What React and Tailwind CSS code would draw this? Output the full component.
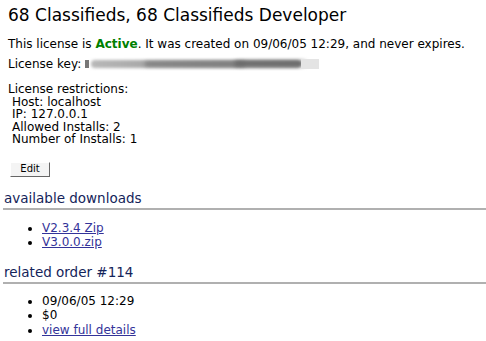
export default function App() {
  const body = { fontFamily: '"DejaVu Sans", Verdana, sans-serif' };
  return (
    <div className="w-[486px] h-[341px] bg-white text-black overflow-hidden" style={body}>
      <div className="pl-[8px] pt-[5px]">
        <h1 className="text-[17px] leading-[20px] font-normal">68 Classifieds, 68 Classifieds Developer</h1>
        <p className="text-[12px] leading-[14px] mt-[12px]">
          This license is <span className="font-bold text-[#008000]">Active</span>. It was created on 09/06/05 12:29, and never expires.
        </p>
        <div className="flex items-center text-[12px] leading-[14px] mt-[6px]">
          <span>License key:</span>
          <div className="ml-[4px] relative w-[234px] h-[12px]">
            <div className="absolute left-0 top-[2px] w-[4px] h-[8px] bg-[#777] blur-[0.5px]" />
            <div className="absolute left-[6px] top-[2px] w-[210px] h-[8px] rounded-full bg-gradient-to-r from-[#b8b8b8] via-[#9a9a9a] to-[#8a8a8a] blur-[1.5px]" />
            <div className="absolute left-[60px] top-[4px] w-[100px] h-[4px] bg-[#777] blur-[2px]" />
            <div className="absolute left-[150px] top-[3px] w-[70px] h-[5px] bg-[#666] blur-[2px]" />
            <div className="absolute left-[216px] top-[1px] w-[18px] h-[10px] bg-[#e4e4e4]" />
          </div>
        </div>
        <div className="text-[12px] leading-[12.6px] mt-[12px]">
          <div>License restrictions:</div>
          <div className="pl-[4px]">Host: localhost</div>
          <div className="pl-[4px]">IP: 127.0.0.1</div>
          <div className="pl-[4px]">Allowed Installs: 2</div>
          <div className="pl-[4px]">Number of Installs: 1</div>
        </div>
        <button className="mt-[16px] ml-[2px] w-[40px] h-[15px] bg-[#f4f4f4] border border-t-white border-l-white border-r-[#666] border-b-[#666] text-[10px] leading-[12px] flex items-center justify-center">
          Edit
        </button>
      </div>
      <h2 className="mt-[13px] ml-[3px] text-[13.5px] leading-[16px] text-[#14245a] font-normal pl-[1px] pb-[2px] border-b-2 border-[#b0b0b0]">
        available downloads
      </h2>
      <ul className="list-disc pl-[42px] mt-[11px] text-[12px] leading-[14.5px]">
        <li><a className="underline text-[#333399]" href="#">V2.3.4 Zip</a></li>
        <li><a className="underline text-[#333399]" href="#">V3.0.0.zip</a></li>
      </ul>
      <h2 className="mt-[14px] ml-[3px] text-[13.5px] leading-[16px] text-[#14245a] font-normal pl-[1px] pb-[2px] border-b-2 border-[#b0b0b0]">
        related order #114
      </h2>
      <ul className="list-disc pl-[42px] mt-[10px] text-[12px] leading-[14.5px]">
        <li>09/06/05 12:29</li>
        <li>$0</li>
        <li><a className="underline text-[#333399]" href="#">view full details</a></li>
      </ul>
    </div>
  );
}
